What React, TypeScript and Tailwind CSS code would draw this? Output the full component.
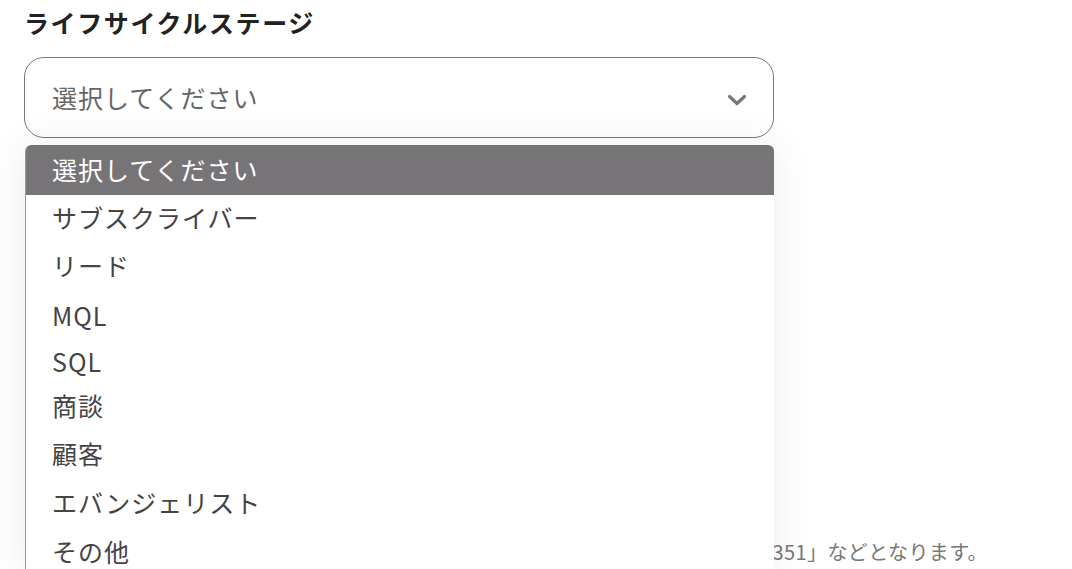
import React from "react";

const options: { label: string; h: number }[] = [
  { label: "選択してください", h: 50 },
  { label: "サブスクライバー", h: 46 },
  { label: "リード", h: 50 },
  { label: "MQL", h: 50 },
  { label: "SQL", h: 42 },
  { label: "商談", h: 46 },
  { label: "顧客", h: 50 },
  { label: "エバンジェリスト", h: 48 },
  { label: "その他", h: 50 },
];

export default function App() {
  const font = { fontFamily: '"Noto Sans CJK JP", "Noto Sans", sans-serif' };
  return (
    <div className="w-[1072px] h-[569px] overflow-hidden bg-white relative" style={font}>
      <div className="pl-[24px] pt-[4px]">
        <h2 className="text-[25px] font-bold text-[#222] leading-[36px] tracking-[1.6px]">
          ライフサイクルステージ
        </h2>
        <div className="relative mt-[17px] w-[750px]">
          <div className="h-[81px] rounded-[20px] border border-[#777] flex items-center justify-between pl-[27px] pr-[26px]">
            <span className="text-[25px] text-[#666] tracking-[1px]">選択してください</span>
            <svg width="20" height="12" viewBox="0 0 20 12" className="mt-[4px]">
              <path d="M2.5 2.5 L10 9.5 L17.5 2.5" fill="none" stroke="#777" strokeWidth="3.2" strokeLinecap="round" strokeLinejoin="round" />
            </svg>
          </div>
          <div className="absolute left-[1px] top-[88px] w-[749px] bg-white rounded-t-[6px] overflow-hidden border-l border-[#999] shadow-[0_0_40px_rgba(0,0,0,0.08)] z-10">
            {options.map((o, i) => (
              <div
                key={o.label}
                className={
                  i === 0
                    ? "flex items-center pl-[26px] bg-[#777477] text-white text-[25px] tracking-[1px]"
                    : "flex items-center pl-[26px] text-[#444] text-[25px] tracking-[1px]"
                }
                style={{ height: o.h }}
              >
                {o.label}
              </div>
            ))}
          </div>
        </div>
        <p className="mt-[399px] w-[964px] text-right text-[20px] text-[#777] leading-[30px] tracking-[0.4px]">
          「例：03-1234-4351」などとなります。
        </p>
      </div>
    </div>
  );
}
